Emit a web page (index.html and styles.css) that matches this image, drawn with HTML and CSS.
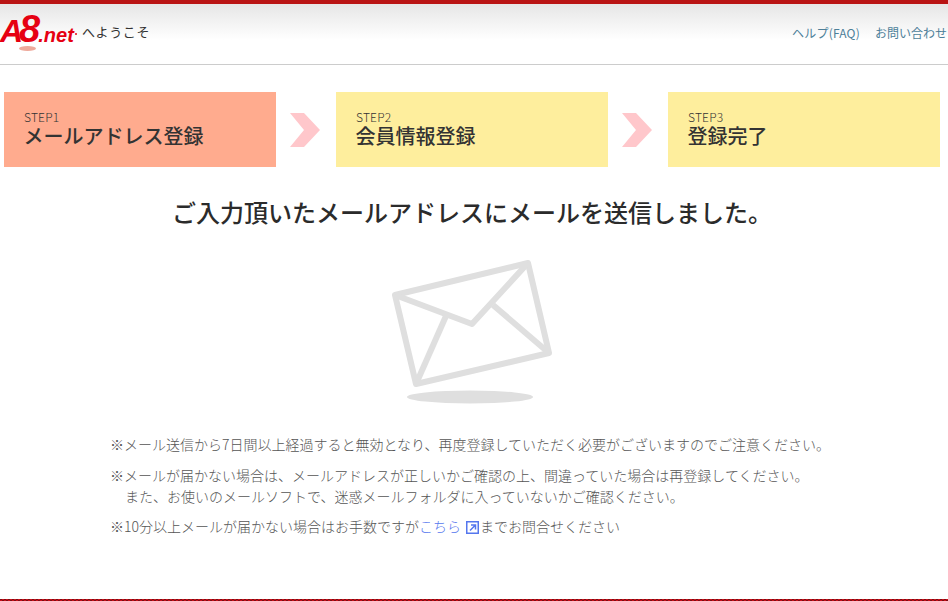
FILE: index.html
```html
<!DOCTYPE html>
<html lang="ja">
  <head>
    <meta charset="UTF-8" />
    <title>メールアドレス登録</title>
    <link rel="stylesheet" href="styles.css">
  </head>
  <body>
    <header class="header">
      <div class="brand">
        <a class="logo" href="#"><span class="logo-a">A</span><span class="logo-8">8</span><span class="logo-net">.net</span><i class="logo-dot"></i><i class="logo-shadow"></i></a>
        <span class="welcome">へようこそ</span>
      </div>
      <nav class="header-nav">
        <a href="#">ヘルプ(FAQ)</a>
        <a href="#">お問い合わせ</a>
      </nav>
    </header>

    <!-- ステップ -->
    <ol class="steps">
      <li class="step current"><span class="step-no">STEP1</span><span class="step-name">メールアドレス登録</span></li>
      <li class="arrow"><svg width="30" height="34" viewBox="0 0 30 34"><path d="M0 0H14L30 17 14 34H0L14 17Z" fill="#ffc7cb"/></svg></li>
      <li class="step"><span class="step-no">STEP2</span><span class="step-name">会員情報登録</span></li>
      <li class="arrow"><svg width="30" height="34" viewBox="0 0 30 34"><path d="M0 0H14L30 17 14 34H0L14 17Z" fill="#ffc7cb"/></svg></li>
      <li class="step"><span class="step-no">STEP3</span><span class="step-name">登録完了</span></li>
    </ol>

    <h1 class="title">ご入力頂いたメールアドレスにメールを送信しました。</h1>

    <div class="mail-icon">
      <svg width="180" height="150" viewBox="0 0 180 150">
        <g fill="none" stroke="#dfdfdf" stroke-width="6" stroke-linejoin="round">
          <path d="M16 36 149 4 170 94 37 125Z"/>
          <path d="M16 36 93 65 149 4"/>
          <path d="M67 57 37 125"/>
          <path d="M114 46 170 94"/>
        </g>
        <ellipse cx="91" cy="138" rx="63" ry="6.5" fill="#dfdfdf"/>
      </svg>
    </div>

    <div class="notes">
      <p>※メール送信から7日間以上経過すると無効となり、再度登録していただく必要がございますのでご注意ください。</p>
      <p>※メールが届かない場合は、メールアドレスが正しいかご確認の上、間違っていた場合は再登録してください。<br /><span class="indent">また、お使いのメールソフトで、迷惑メールフォルダに入っていないかご確認ください。</span></p>
      <p>※10分以上メールが届かない場合はお手数ですが<a href="#">こちら</a><svg class="ext" width="13" height="13" viewBox="0 0 13 13"><path d="M.75.75h11.5v11.5H.75z" fill="none" stroke="#5577ee" stroke-width="1.5"/><path d="M4 9.5 9 4.5M5 4h4.5v4.5" fill="none" stroke="#5577ee" stroke-width="1.5"/></svg>までお問合せください</p>
    </div>

    <div class="footer-line"></div>
  </body>
</html>
```

FILE: styles.css
```css
* {
  box-sizing: border-box;
}
html,
body {
  height: 100%;
}
body {
  margin: 0;
  display: flex;
  flex-direction: column;
  overflow: hidden;
  font-family: "Noto Sans CJK JP", "Noto Sans", sans-serif;
  color: #333;
  background: #fff;
}
a {
  text-decoration: none;
}
.header {
  height: 65px;
  flex: none;
  display: flex;
  justify-content: space-between;
  align-items: center;
  padding-bottom: 4px;
  border-top: 4px solid #b91414;
  border-bottom: 1px solid #ccc;
  background: linear-gradient(#e6e6e6, #fff 36px);
}
.brand {
  display: flex;
  align-items: center;
}
.logo {
  position: relative;
  display: flex;
  align-items: baseline;
  width: 78px;
  height: 40px;
  margin-top: -6px;
  color: #e60012;
  font-family: "Liberation Sans", sans-serif;
  font-style: italic;
  font-weight: 700;
  line-height: 40px;
}
.logo-a {
  font-size: 32px;
  margin-right: -4px;
}
.logo-8 {
  font-size: 38px;
}
.logo-net {
  font-size: 20px;
  margin-left: -2px;
}
.logo-dot {
  position: absolute;
  left: 75px;
  top: 24px;
  width: 2px;
  height: 2px;
  border-radius: 50%;
  background: #e60012;
}
.logo-shadow {
  position: absolute;
  left: 19px;
  top: 37px;
  width: 17px;
  height: 5px;
  border-radius: 50%;
  background: #eea99b;
}
.welcome {
  margin-left: 4px;
  font-size: 13px;
  line-height: 20px;
  letter-spacing: 0.6px;
}
.header-nav {
  display: flex;
  gap: 15px;
  font-size: 12px;
  white-space: nowrap;
  margin-right: 1px;
  margin-top: 1px;
}
.header-nav a {
  color: #4d7f99;
}
.header-nav a:first-child {
  letter-spacing: 0.2px;
}
.steps {
  list-style: none;
  margin: 27px 8px 0 4px;
  padding: 0;
  display: flex;
  justify-content: space-between;
  align-items: center;
}
.step {
  width: 272px;
  height: 75px;
  padding: 18px 19px 0 20px;
  background: #feee9d;
}
.step.current {
  background: #ffab8e;
}
.step-no,
.step-name {
  display: block;
}
.step-no {
  font-size: 12px;
  font-weight: 300;
  line-height: 14px;
  letter-spacing: 0.2px;
}
.step-name {
  margin-left: -0.5px;
  font-size: 20px;
  font-weight: 500;
  line-height: 24px;
}
.arrow {
  display: flex;
  margin-left: 14px;
  margin-right: 16px;
}
.title {
  margin: 30px 0 0;
  padding-right: 4px;
  text-align: center;
  font-size: 24px;
  line-height: 30px;
  font-weight: 500;
  color: #2b2b2b;
}
.mail-icon {
  margin: 32px 0 0 379px;
  height: 150px;
}
.notes {
  margin: 25px 0 0 110px;
  font-size: 14px;
  font-weight: 300;
  line-height: 21px;
  color: #555;
  white-space: nowrap;
}
.notes p {
  margin: 0 0 10px;
}
.notes p:last-child {
  margin-top: -1px;
}
.notes a {
  color: #5577ee;
}
.indent {
  margin-left: 15px;
}
.ext {
  margin: 0 1px 0 5px;
  vertical-align: -2px;
}
.footer-line {
  margin-top: auto;
  height: 2px;
  flex: none;
  background: repeating-conic-gradient(#c8101a 0 25%, #7d0c12 0 50%) 0 0 / 4px 2px;
}
```
